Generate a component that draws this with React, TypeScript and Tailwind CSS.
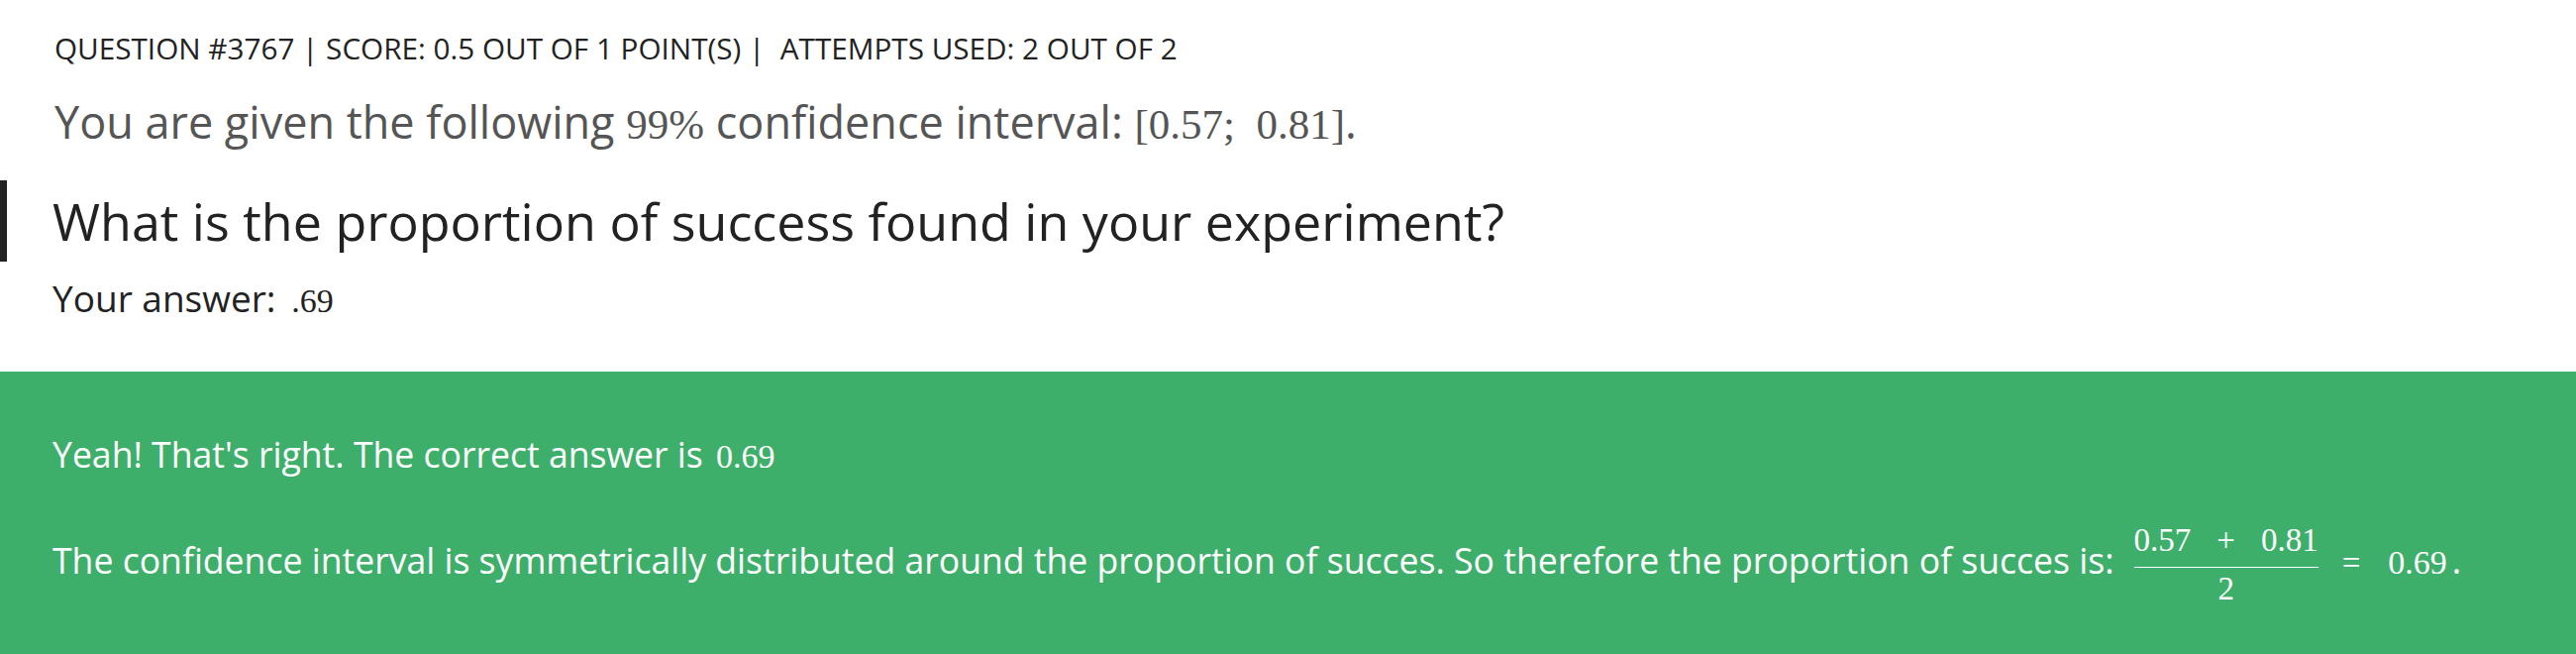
import React from 'react';

function M({ children, className = '' }: { children: React.ReactNode; className?: string }) {
  return <span className={`font-['Liberation_Serif',serif] leading-none ${className}`}>{children}</span>;
}

function Fraction() {
  return (
    <span className="ml-[20px] inline-flex flex-col items-center align-[23px] font-['Liberation_Serif',serif] text-[33px] leading-[33px]">
      <span className="mb-[10px] whitespace-nowrap">
        0.57<span className="mx-[26px]">+</span>0.81
      </span>
      <span className="h-px w-full bg-white" />
      <span className="mt-[5px]">2</span>
    </span>
  );
}

export default function App() {
  return (
    <div className="flex min-h-screen flex-col bg-white font-['Open_Sans',sans-serif]">
      <div className="px-[55px] pt-[26px]">
        <div className="whitespace-pre text-[29.7px] leading-[45px] text-[#222]">
          QUESTION #3767 | SCORE: 0.5 OUT OF 1 POINT(S) |  ATTEMPTS USED: 2 OUT OF 2
        </div>
        <p className="mt-[16px] text-[45px] leading-[72px] text-[#555]">
          You are given the following <M className="text-[43px]">99%</M> confidence interval:{' '}
          <M className="text-[43px]">[0.57;&nbsp;&nbsp;0.81]</M>.
        </p>
      </div>

      <h2 className="mt-[23px] border-l-[7px] border-[#222] pl-[46px] text-[52px] leading-[82px] text-[#222]">
        What is the proportion of success found in your experiment?
      </h2>

      <p className="mt-[8px] px-[53px] text-[37px] leading-[57px] text-[#222]">
        Your answer: <M className="ml-[6px] text-[34px]">.69</M>
      </p>

      {/* feedback panel */}
      <div className="mt-[46px] flex-1 bg-[#3eaf6a] px-[53px] pt-[55px] pb-[40px] text-[35.6px] leading-[57px] text-white">
        <p>
          Yeah! That's right. The correct answer is <M className="ml-[4px] text-[34px]">0.69</M>
        </p>
        <p className="mt-[42px] whitespace-nowrap">
          The confidence interval is symmetrically distributed around the proportion of succes. So therefore the proportion of succes is:
          <Fraction />
          <M className="ml-[24px] text-[33px]">=</M>
          <M className="ml-[28px] text-[34px]">0.69</M>
          <span className="ml-[5px]">.</span>
        </p>
      </div>
    </div>
  );
}
